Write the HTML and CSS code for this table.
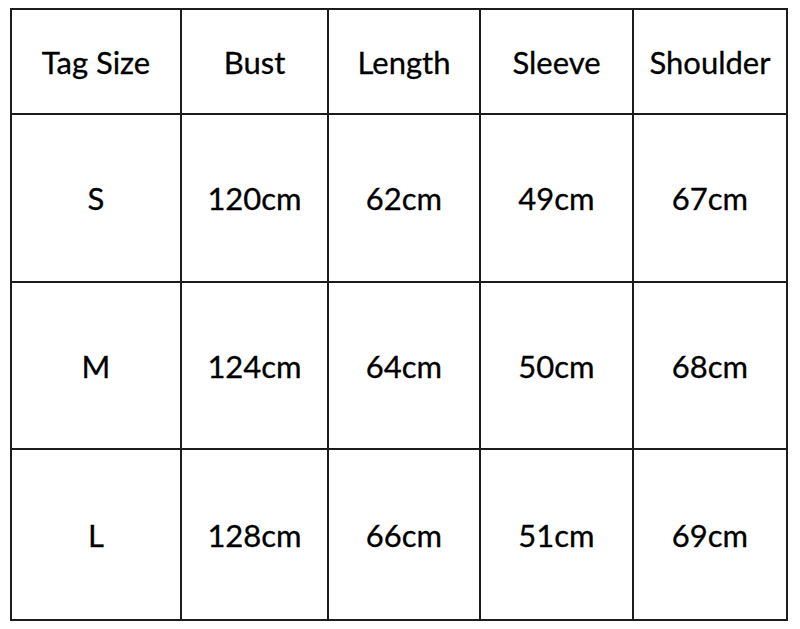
FILE: index.html
```html
<!DOCTYPE html>
<html>
<head>
<meta charset="utf-8">
<link rel="stylesheet" href="styles.css">
</head>
<body>
<div class="chart">
  <div class="cell">Tag Size</div>
  <div class="cell">Bust</div>
  <div class="cell">Length</div>
  <div class="cell">Sleeve</div>
  <div class="cell">Shoulder</div>
  <div class="cell">S</div>
  <div class="cell">120cm</div>
  <div class="cell">62cm</div>
  <div class="cell">49cm</div>
  <div class="cell">67cm</div>
  <div class="cell">M</div>
  <div class="cell">124cm</div>
  <div class="cell">64cm</div>
  <div class="cell">50cm</div>
  <div class="cell">68cm</div>
  <div class="cell">L</div>
  <div class="cell">128cm</div>
  <div class="cell">66cm</div>
  <div class="cell">51cm</div>
  <div class="cell">69cm</div>
</div>
</body>
</html>
```
FILE: styles.css
```css
html, body {
  margin: 0;
  padding: 0;
  background: #ffffff;
}
body {
  font-family: "Lato", "Open Sans", "Liberation Sans", sans-serif;
}
.chart {
  display: inline-grid;
  margin: 8px 0 0 10px;
  padding: 2px;
  gap: 2px;
  background: #1c1c1c;
  grid-template-columns: 168px 145px 150px 151px 152px;
  grid-template-rows: 103px 166px 165px 169px;
}
.cell {
  background: #ffffff;
  display: flex;
  align-items: center;
  justify-content: center;
  font-size: 31px;
  color: #000000;
  -webkit-text-stroke: 0.3px #000000;
}
```
